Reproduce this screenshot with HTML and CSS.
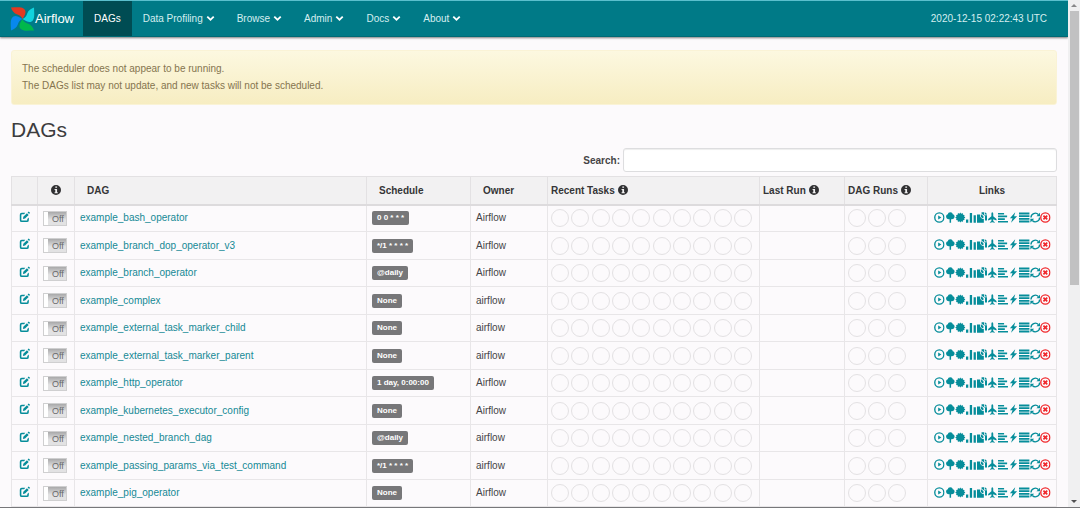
FILE: index.html
```html
<!DOCTYPE html>
<html lang="en">
<head>
    <meta charset="UTF-8">
    <meta name="viewport" content="width=device-width, initial-scale=1.0">
    <title>Airflow - DAGs</title>
    <link rel="stylesheet" href="styles.css">
</head>
<body>
    <svg class="sprite" aria-hidden="true">
        <symbol id="chevron" viewBox="0 0 14 14"><path d="M1 5l2-2 4 4 4-4 2 2-6 6z"/></symbol>
        <symbol id="info" viewBox="0 0 14 14"><path fill-rule="evenodd" d="M7 0a7 7 0 1 1 0 14A7 7 0 0 1 7 0zM6 2v2h2.500V2zM5 5.500v1.500h1v3H5v1.500h4.500V10h-1V5.500z"/></symbol>
        <symbol id="edit" viewBox="0 0 14 14"><path d="M8 1.500H3.500A2.500 2.500 0 0 0 1 4v7a2.500 2.500 0 0 0 2.500 2.500h6.500A2.500 2.500 0 0 0 12.500 11V7.500l-2 2v1.200a.8.8 0 0 1-.8.8H3.800a.8.8 0 0 1-.8-.8V4.300a.8.8 0 0 1 .8-.8h2.700z"/><path d="M5 9.500l.5-2.700 4.600-4.600 2.200 2.200L7.700 9z"/><path d="M11 1.300L12.300 0 14 1.700 12.900 3.200z"/></symbol>
        <symbol id="play" viewBox="0 0 14 14"><circle cx="7" cy="7" r="6" fill="none" stroke="currentColor" stroke-width="1.800"/><path d="M5.500 4.500v5L9.700 7z"/></symbol>
        <symbol id="tree" viewBox="0 0 14 14"><path d="M7 0c2 0 3 1.200 3.200 2.600C11.600 3 12.600 4 12.600 5.600c0 2-1.500 3.600-3.600 3.600H8V14H6V9.200H5C2.900 9.200 1.400 7.600 1.400 5.600c0-1.600 1-2.600 2.400-3C4 1.200 5 0 7 0z"/></symbol>
        <symbol id="cert" viewBox="0 0 14 14"><path d="M7 .5l1.200 1.600 1.900-.9.400 2.100 2.100.3-.6 2 1.700 1.400-1.700 1.400.6 2-2.100.3-.4 2.100-1.900-.9L7 13.500l-1.200-1.600-1.900.9-.4-2.100-2.100-.3.600-2L.3 7 2 5.600l-.6-2 2.100-.3.400-2.100 1.900.9z"/></symbol>
        <symbol id="stats" viewBox="0 0 14 14"><path d="M0 9.500h3V14H0zM5 1h3v13H5zM10 4h3v10h-3z"/></symbol>
        <symbol id="copy" viewBox="0 0 14 14"><path d="M0 3h4v3l3 3h2v5H0z"/><path d="M5 3h1l2.500 2.500V8H7L5 6z"/><path d="M6 0h3.500v4H14v7h-3.500V5L6 2.200zM10.500 0L14 3.200h-3.500z"/></symbol>
        <symbol id="plane" viewBox="0 0 14 14"><path d="M7 0c.8 0 1.200 1 1.200 2v3.200L12.500 9v2L8.200 9.200v2.500l2 1.500v.8L7 13.300 3.800 14v-.8l2-1.500V9.200L1.500 11V9l4.300-3.800V2c0-1 .4-2 1.200-2z"/></symbol>
        <symbol id="left" viewBox="0 0 14 14"><path d="M0 1h8v2.200H0zM0 4.500h12v2.200H0zM0 8h9v2.200H0zM0 11.500h14v2.200H0z"/></symbol>
        <symbol id="flash" viewBox="0 0 14 14"><path d="M9.500 0L2.500 8h3.500L4 14l8-8.700H8z"/></symbol>
        <symbol id="list" viewBox="0 0 14 14"><path d="M0 0.500h14v2.500H0zM0 4h14v2.500H0zM0 7.500h14V10H0zM0 11h14v2.500H0z"/></symbol>
        <symbol id="refresh" viewBox="0 0 14 14"><path d="M1.300 7A5.700 5.700 0 0 1 11 3M12.700 7A5.700 5.700 0 0 1 3 11" fill="none" stroke="currentColor" stroke-width="1.800"/><path d="M13.500 0.500v5H8.500zM.5 13.500v-5H5.500z"/></symbol>
        <symbol id="remove" viewBox="0 0 14 14"><circle cx="7" cy="7" r="6" fill="none" stroke="currentColor" stroke-width="1.800"/><path d="M4.500 4.500l5 5M9.500 4.500l-5 5" fill="none" stroke="currentColor" stroke-width="2.200"/></symbol>
    </svg>

    <div class="window">
        <div class="page">
            <nav class="navbar">
                <a class="brand" href="#">
                    <svg class="logo" viewBox="0 0 26 26">
                        <path fill="#e43921" d="M1 1c5 0 10-1 13 1 3 2 3 5-1 11-1-3-3-4-6-5C4 7 2 4 1 1z"/>
                        <path fill="#11d3de" d="M25 1c0 5 1 10-1 13-2 3-5 3-11-1 3-1 4-3 5-6 1-3 4-5 7-6z"/>
                        <path fill="#00b84c" d="M25 25c-5 0-10 1-13-1-3-2-3-5 1-11 1 3 3 4 6 5 3 1 5 4 6 7z"/>
                        <path fill="#0788ee" d="M1 25c0-5-1-10 1-13 2-3 5-3 11 1-3 1-4 3-5 6-1 3-4 5-7 6z"/>
                    </svg>
                    Airflow
                </a>
                <a class="nav-item active" href="#">DAGs</a>
                <a class="nav-item" href="#">Data Profiling <svg class="caret"><use href="#chevron"/></svg></a>
                <a class="nav-item" href="#">Browse <svg class="caret"><use href="#chevron"/></svg></a>
                <a class="nav-item" href="#">Admin <svg class="caret"><use href="#chevron"/></svg></a>
                <a class="nav-item" href="#">Docs <svg class="caret"><use href="#chevron"/></svg></a>
                <a class="nav-item" href="#">About <svg class="caret"><use href="#chevron"/></svg></a>
                <span class="clock">2020-12-15 02:22:43 UTC</span>
            </nav>

            <main class="container">
                <div class="alert">
                    <p>The scheduler does not appear to be running.</p>
                    <p>The DAGs list may not update, and new tasks will not be scheduled.</p>
                </div>

                <h2>DAGs</h2>

                <div class="search">
                    <label for="search">Search:</label>
                    <input type="search" id="search">
                </div>

                <table class="dags">
                    <colgroup>
                        <col class="col-edit"><col class="col-toggle"><col><col class="col-schedule"><col class="col-owner">
                        <col class="col-tasks"><col class="col-last"><col class="col-runs"><col class="col-links">
                    </colgroup>
                    <thead>
                        <tr>
                            <th></th>
                            <th class="center"><svg class="info"><use href="#info"/></svg></th>
                            <th class="wide">DAG</th>
                            <th class="wide">Schedule</th>
                            <th class="wide">Owner</th>
                            <th>Recent Tasks <svg class="info"><use href="#info"/></svg></th>
                            <th>Last Run <svg class="info"><use href="#info"/></svg></th>
                            <th>DAG Runs <svg class="info"><use href="#info"/></svg></th>
                            <th class="center">Links</th>
                        </tr>
                    </thead>
                    <tbody id="dagRows"></tbody>
                </table>
            </main>
        </div>

        <div class="scrollbar">
            <span class="arrow up"></span>
            <span class="thumb"></span>
            <span class="arrow down"></span>
        </div>
    </div>

    <script>
        const dags = [
            ['example_bash_operator', '0 0 * * *', 'Airflow'],
            ['example_branch_dop_operator_v3', '*/1 * * * *', 'Airflow'],
            ['example_branch_operator', '@daily', 'Airflow'],
            ['example_complex', 'None', 'airflow'],
            ['example_external_task_marker_child', 'None', 'airflow'],
            ['example_external_task_marker_parent', 'None', 'airflow'],
            ['example_http_operator', '1 day, 0:00:00', 'Airflow'],
            ['example_kubernetes_executor_config', 'None', 'Airflow'],
            ['example_nested_branch_dag', '@daily', 'airflow'],
            ['example_passing_params_via_test_command', '*/1 * * * *', 'airflow'],
            ['example_pig_operator', 'None', 'Airflow']
        ];
        const links = ['play', 'tree', 'cert', 'stats', 'copy', 'plane', 'left', 'flash', 'list', 'refresh', 'remove'];

        const icon = name => `<svg><use href="#${name}"/></svg>`;
        const circles = (name, count) => `<div class="circles ${name}">${'<i></i>'.repeat(count)}</div>`;

        document.getElementById('dagRows').innerHTML = dags.map(([id, schedule, owner]) => `
            <tr>
                <td class="edit"><a href="#" aria-label="Edit ${id}">${icon('edit')}</a></td>
                <td><label class="toggle"><input type="checkbox" aria-label="${id}"><span>Off</span></label></td>
                <td class="text"><a href="#">${id}</a></td>
                <td><a class="label" href="#">${schedule}</a></td>
                <td class="text">${owner}</td>
                <td>${circles('tasks', 10)}</td>
                <td></td>
                <td>${circles('runs', 3)}</td>
                <td class="icons"><div class="links">${links.map(name => `<a class="${name}" href="#" aria-label="${name}">${icon(name)}</a>`).join('')}</div></td>
            </tr>
        `).join('');
    </script>
</body>
</html>
```
FILE: styles.css
```css
* {
    box-sizing: border-box;
}
body {
    margin: 0;
    font-family: "Liberation Sans", Arial, sans-serif;
    font-size: 10px;
    line-height: 17px;
    color: #454446;
    background-color: #fcfafc;
}
a {
    color: #158995;
    text-decoration: none;
}
svg {
    fill: currentColor;
}
.sprite {
    display: none;
}
.window {
    display: flex;
    height: 100vh;
    border-bottom: 1px solid #77777a;
}
.page {
    flex: 1;
    overflow: hidden;
}

/* top bar */
.navbar {
    display: flex;
    height: 37px;
    padding-right: 21px;
    background-color: #007a87;
    border-top: 1px solid #5bbfcd;
    border-bottom: 1px solid #006a75;
    box-shadow: 0 1px 2px rgba(0, 0, 0, 0.5);
}
.navbar a {
    display: flex;
    align-items: center;
    color: #d5eef0;
}
.navbar .brand {
    width: 83px;
    padding-left: 10px;
    font-size: 13px;
    color: #ffffff;
}
.logo {
    width: 25px;
    height: 26px;
    flex: none;
}
.navbar .nav-item {
    padding: 0 11px;
    gap: 3px;
}
.navbar .active {
    color: #ffffff;
    background-color: #004c53;
}
.caret {
    width: 9px;
    height: 9px;
    color: #ffffff;
}
.clock {
    margin-left: auto;
    line-height: 35px;
    color: #d5eef0;
}

.container {
    padding: 13px 11px 0;
}
.alert {
    padding: 9px 10px 10px;
    color: #85744f;
    background: linear-gradient(#fcf8e0, #f7edc2);
    border: 1px solid #faf3d6;
    border-radius: 3px;
}
.alert p {
    margin: 0;
}
h2 {
    margin: 11px 0 4px;
    font-size: 21px;
    font-weight: normal;
    line-height: 28px;
    color: #3c3c3e;
}
.search {
    display: flex;
    justify-content: flex-end;
    align-items: center;
    gap: 3px;
    margin-bottom: 4px;
}
.search label {
    font-weight: bold;
}
.search input {
    width: 434px;
    height: 24px;
    padding: 4px 8px;
    font: inherit;
    background-color: #ffffff;
    border: 1px solid #dddddf;
    border-radius: 3px;
    box-shadow: inset 0 1px 1px rgba(0, 0, 0, 0.07);
}

/* dag list */
.dags {
    width: 100%;
    table-layout: fixed;
    border-collapse: collapse;
    border: 1px solid #e8e6e8;
}
.col-edit { width: 26px; }
.col-toggle { width: 37px; }
.col-schedule { width: 104px; }
.col-owner { width: 77px; }
.col-tasks { width: 212px; }
.col-last { width: 85px; }
.col-runs { width: 83px; }
.col-links { width: 129px; }
.dags th {
    height: 28px;
    padding: 0 3px;
    text-align: left;
    color: #353537;
    background-color: #f2f1f2;
    border: 1px solid #e3e1e3;
    border-bottom: 2px solid #dddbdd;
}
.dags .wide {
    padding-left: 12px;
}
.dags .center {
    text-align: center;
}
.info {
    width: 10px;
    height: 10px;
    vertical-align: -1px;
    color: #303032;
}
.dags td {
    height: 27px;
    padding: 0 5px;
    border: 1px solid #e8e6e8;
}
.dags tr:nth-child(even) td {
    height: 28px;
}
.dags .text {
    padding-bottom: 1px;
}
.dags .edit {
    padding: 0 7px 3px;
}
.dags .icons {
    padding: 0 5px 2px 6px;
}
.edit svg {
    display: block;
    width: 11px;
    height: 12px;
}
.edit a {
    color: #068d9a;
}
.toggle {
    display: flex;
    width: 24px;
    height: 15px;
    border: 1px solid #cfcfd0;
    background: linear-gradient(#a9a9aa, #e2e2e3 60%);
    font-size: 9px;
    line-height: 14px;
    color: #69696b;
}
.toggle input {
    appearance: none;
    width: 4px;
    height: 13px;
    margin: 0 4px 0 0;
    background-color: #ffffff;
}
.label {
    display: block;
    width: fit-content;
    padding: 0 5px;
    font-size: 8px;
    font-weight: bold;
    line-height: 14px;
    color: #ffffff;
    background-color: #777779;
    border-radius: 2px;
}
.circles {
    display: flex;
    gap: 2px;
}
.circles i {
    width: 18px;
    height: 18px;
    border: 1px solid #e3e1e3;
    border-radius: 50%;
}
.tasks {
    justify-content: space-between;
    margin: 0 2px 0 -2px;
}
.runs {
    margin-left: -2px;
}
.links {
    display: flex;
}
.links a {
    flex: 1;
    color: #068d9a;
}
.links svg {
    display: block;
    width: 100%;
    height: 11px;
}
.links .remove {
    color: #f0282c;
}

/* page scrollbar */
.scrollbar {
    display: flex;
    flex-direction: column;
    align-items: center;
    width: 12px;
    padding: 4px 0;
    background-color: #f0f0f1;
}
.thumb {
    width: 9px;
    height: 54vh;
    margin-top: 4px;
    background-color: #c1c1c2;
}
.arrow {
    border: 3px solid transparent;
}
.up {
    border-top: none;
    border-bottom-color: #88888a;
}
.down {
    margin-top: auto;
    border-bottom: none;
    border-top-color: #505052;
}
```
